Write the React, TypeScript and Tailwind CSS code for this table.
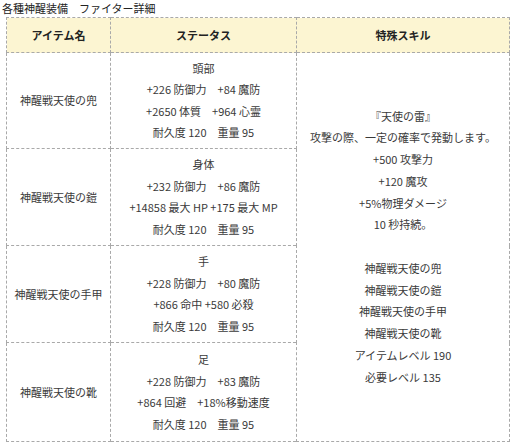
import React from "react";

type Row = {
  name: string;
  part: string;
  lines: string[];
  h: string;
};

const rows: Row[] = [
  {
    name: "神醒戦天使の兜",
    part: "頭部",
    lines: ["+226 防御力　+84 魔防", "+2650 体質　+964 心霊", "耐久度 120　重量 95"],
    h: "h-[96px]",
  },
  {
    name: "神醒戦天使の鎧",
    part: "身体",
    lines: ["+232 防御力　+86 魔防", "+14858 最大 HP +175 最大 MP", "耐久度 120　重量 95"],
    h: "h-[97px]",
  },
  {
    name: "神醒戦天使の手甲",
    part: "手",
    lines: ["+228 防御力　+80 魔防", "+866 命中 +580 必殺", "耐久度 120　重量 95"],
    h: "h-[97px]",
  },
  {
    name: "神醒戦天使の靴",
    part: "足",
    lines: ["+228 防御力　+83 魔防", "+864 回避　+18%移動速度", "耐久度 120　重量 95"],
    h: "h-[99px]",
  },
];

const skill = [
  "『天使の雷』",
  "攻撃の際、一定の確率で発動します。",
  "+500 攻撃力",
  "+120 魔攻",
  "+5%物理ダメージ",
  "10 秒持続。",
  "",
  "神醒戦天使の兜",
  "神醒戦天使の鎧",
  "神醒戦天使の手甲",
  "神醒戦天使の靴",
  "アイテムレベル 190",
  "必要レベル 135",
];

const cell = "border border-dashed border-[#a9a9a9] text-center align-middle p-0";

export default function App() {
  return (
    <div
      className="w-[512px] h-[443px] bg-white text-[#3a3a3a] text-[11px] overflow-hidden"
      style={{ fontFamily: '"Noto Sans CJK JP", "Noto Sans", sans-serif' }}
    >
      <div className="pl-[2px] leading-[17px] text-[#222]">各種神醒装備　ファイター詳細</div>

      <table className="ml-[6px] w-[503px] border-collapse table-fixed">
        <colgroup>
          <col className="w-[104px]" />
          <col className="w-[186px]" />
          <col className="w-[213px]" />
        </colgroup>
        <thead>
          <tr className="h-[35px] bg-[#fcf5d2]">
            <th className={`${cell} font-bold text-[#222]`}>アイテム名</th>
            <th className={`${cell} font-bold text-[#222]`}>ステータス</th>
            <th className={`${cell} font-bold text-[#222]`}>特殊スキル</th>
          </tr>
        </thead>
        <tbody>
          {rows.map((row, i) => (
            <tr key={row.name} className={row.h}>
              <td className={cell}>{row.name}</td>
              <td className={`${cell} leading-[21.5px]`}>
                <div>{row.part}</div>
                {row.lines.map((line) => (
                  <div key={line} className="whitespace-nowrap">
                    {line}
                  </div>
                ))}
              </td>
              {i === 0 && (
                <td rowSpan={4} className={`${cell} leading-[21.75px]`}>
                  {skill.map((line, k) => (
                    <div key={k} className="whitespace-nowrap">
                      {line || "\u00a0"}
                    </div>
                  ))}
                </td>
              )}
            </tr>
          ))}
        </tbody>
      </table>
    </div>
  );
}
